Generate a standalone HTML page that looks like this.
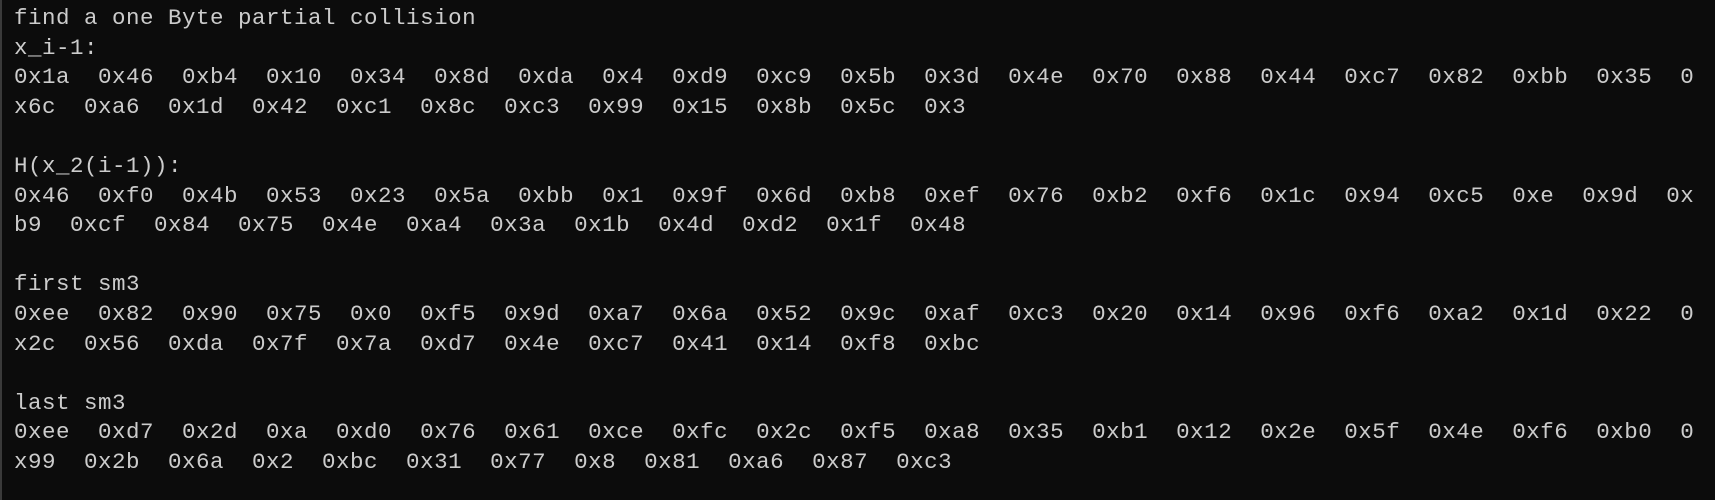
<!DOCTYPE html>
<html><head><style>
html,body{margin:0;padding:0;background:#0c0c0c;width:1715px;height:500px;overflow:hidden}
.b{position:absolute;left:0;top:0;width:2px;height:500px;background:#3a3a3a}
pre{position:absolute;left:14px;top:4px;margin:0;font-family:"Liberation Mono",monospace;font-size:22.5px;letter-spacing:0.5px;line-height:29.6px;color:#cccccc;white-space:pre}
</style></head><body><div class="b"></div><pre>find a one Byte partial collision
x_i-1:
0x1a  0x46  0xb4  0x10  0x34  0x8d  0xda  0x4  0xd9  0xc9  0x5b  0x3d  0x4e  0x70  0x88  0x44  0xc7  0x82  0xbb  0x35  0
x6c  0xa6  0x1d  0x42  0xc1  0x8c  0xc3  0x99  0x15  0x8b  0x5c  0x3

H(x_2(i-1)):
0x46  0xf0  0x4b  0x53  0x23  0x5a  0xbb  0x1  0x9f  0x6d  0xb8  0xef  0x76  0xb2  0xf6  0x1c  0x94  0xc5  0xe  0x9d  0x
b9  0xcf  0x84  0x75  0x4e  0xa4  0x3a  0x1b  0x4d  0xd2  0x1f  0x48

first sm3
0xee  0x82  0x90  0x75  0x0  0xf5  0x9d  0xa7  0x6a  0x52  0x9c  0xaf  0xc3  0x20  0x14  0x96  0xf6  0xa2  0x1d  0x22  0
x2c  0x56  0xda  0x7f  0x7a  0xd7  0x4e  0xc7  0x41  0x14  0xf8  0xbc

last sm3
0xee  0xd7  0x2d  0xa  0xd0  0x76  0x61  0xce  0xfc  0x2c  0xf5  0xa8  0x35  0xb1  0x12  0x2e  0x5f  0x4e  0xf6  0xb0  0
x99  0x2b  0x6a  0x2  0xbc  0x31  0x77  0x8  0x81  0xa6  0x87  0xc3
</pre></body></html>
